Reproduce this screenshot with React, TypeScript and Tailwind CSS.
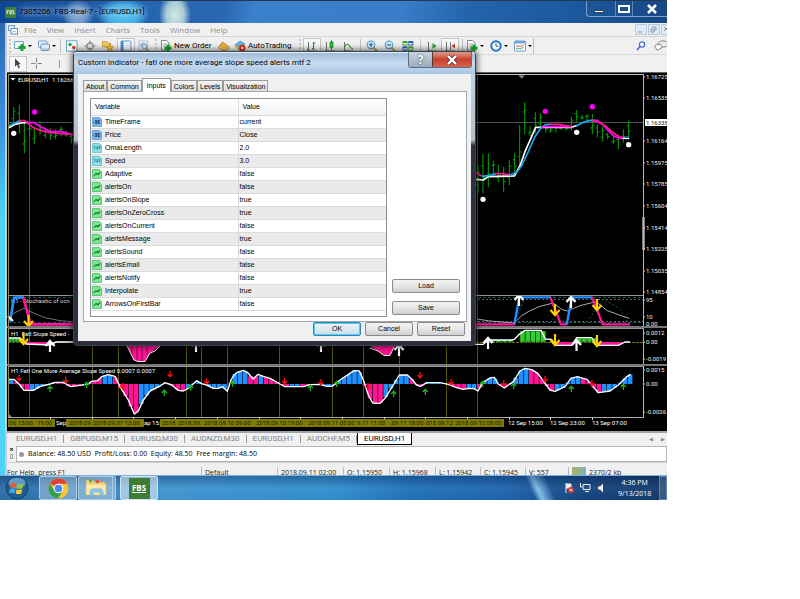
import React from "react";

type Pt = [number, number];

const BLUE = "#1e90ff";
const PINK = "#ff1493";
const GREEN = "#32cd32";
const MAGENTA = "#ff00ff";
const CYAN = "#18a8e8";

/* ---------- small icons ---------- */

function Icon({ children, size = 12 }: { children: React.ReactNode; size?: number }) {
  return (
    <svg width={size} height={size} viewBox="0 0 12 12" className="shrink-0" aria-hidden="true">
      {children}
    </svg>
  );
}

const Plus = ({ x, y }: { x: number; y: number }) => (
  <path d={`M${x - 3.5} ${y}h7M${x} ${y - 3.5}v7`} stroke="#12a52b" strokeWidth="2.800" />
);

const icons = {
  newChart: (
    <Icon>
      <rect x="0.5" y="1.5" width="9" height="7" rx="0.5" fill="#eef6fb" stroke="#6fa5c8" />
      <Plus x={8} y={7.5} />
    </Icon>
  ),
  profiles: (
    <Icon>
      <rect x="0.5" y="1" width="8.5" height="6.5" rx="1" fill="#e6f1fa" stroke="#6e9fcc" />
      <rect x="3" y="4" width="8.5" height="6.500" rx="1" fill="#dfecf8" stroke="#5e92c4" />
      <path d="M3.5 9h7.5" stroke="#8fb5da" />
    </Icon>
  ),
  market: (
    <Icon>
      <rect x="0.5" y="0.8" width="10.5" height="10.4" fill="#f7fbfd" stroke="#6aa3cb" />
      <circle cx="4" cy="4.500" r="1.700" fill="#1fa82d" />
      <circle cx="7.700" cy="7.500" r="1.700" fill="#e0311c" />
    </Icon>
  ),
  cross: (
    <Icon>
      <circle cx="6" cy="6" r="3.200" fill="none" stroke="#85898d" strokeWidth="1.200" />
      <path d="M6 0.500v4M6 7.500v4M0.500 6h4M7.500 6h4" stroke="#85898d" strokeWidth="1.200" />
    </Icon>
  ),
  star: (
    <Icon>
      <path d="M0.500 1.500h4l1 1.500h3v4h-8z" fill="#f0cf62" stroke="#ba8c1c" strokeWidth="0.700" />
      <path d="M8 4l1.200 2.300 2.500.3-1.900 1.700.5 2.500L8 9.600l-2.300 1.200.5-2.500-1.900-1.700 2.500-.3z" fill="#f8c52c" stroke="#b9800a" strokeWidth="0.600" />
    </Icon>
  ),
  navigator: (
    <Icon>
      <rect x="1" y="1" width="10" height="10" rx="1" fill="#f4fafe" stroke="#5d98cf" />
      <rect x="1" y="1" width="2.500" height="10" fill="#4d8ac4" />
      <path d="M5.500 3.500h4M5.500 5.500h4" stroke="#b3cfe6" strokeWidth="0.700" />
    </Icon>
  ),
  tester: (
    <Icon>
      <rect x="1" y="1" width="8.5" height="9.5" fill="#f3f7fa" stroke="#9db6c9" strokeWidth="0.800" />
      <path d="M3 3v4M5 2.500v3M7 3v3" stroke="#5d7f9a" strokeWidth="0.800" />
      <circle cx="6.500" cy="6.500" r="2.400" fill="#cde6f5" stroke="#6c9abd" />
      <path d="M8.300 8.500l2.500 2.500" stroke="#b8953e" strokeWidth="1.500" />
    </Icon>
  ),
  order: (
    <Icon>
      <path d="M1.500 0.500h5l2.500 2.500v7h-7.500z" fill="#fff" stroke="#6f7d85" strokeWidth="0.900" />
      <path d="M3 4h4M3 6h3" stroke="#8d9ba4" strokeWidth="0.800" />
      <Plus x={8} y={8} />
    </Icon>
  ),
  tag: (
    <Icon>
      <path d="M0.800 7l3.700-5 6.500 5v1.500l-4.500 2.500-5.700-3z" fill="#eab53a" stroke="#a9710e" strokeWidth="0.800" />
      <path d="M1 7.200l5.500 2.300 4.300-2" fill="none" stroke="#fae7a5" />
    </Icon>
  ),
  auto: (
    <Icon>
      <path d="M1 5l5-4 5 3-4.500 4z" fill="#62b4e0" stroke="#3a84b4" strokeWidth="0.700" />
      <path d="M1 6l5 5 4-3" fill="#f1c23e" stroke="#c7952b" strokeWidth="0.700" />
      <circle cx="8.300" cy="8" r="3.200" fill="#d9301d" />
      <rect x="7.200" y="6.900" width="2.200" height="2.200" fill="#fff" />
    </Icon>
  ),
  bars: (
    <Icon>
      <path d="M2.500 2v9M1 9.500h2" stroke="#666" />
      <path d="M7.500 2v8M7.500 3h2M6 8.500h1.500" stroke="#1b9e2c" strokeWidth="1.200" />
      <path d="M1 11h10" stroke="#666" strokeWidth="0.800" />
    </Icon>
  ),
  candles: (
    <Icon>
      <path d="M2.500 2v9M1 11h10" stroke="#666" strokeWidth="0.900" />
      <path d="M7.500 0.500v9" stroke="#13851f" />
      <rect x="6" y="2" width="3" height="5.500" fill="#25c438" stroke="#13851f" strokeWidth="0.700" />
    </Icon>
  ),
  line: (
    <Icon>
      <path d="M2.500 2v9M1 11h10" stroke="#666" strokeWidth="0.900" />
      <path d="M2.500 7c2-4 4-3 5-1s2 2.500 3.500 3" stroke="#1b9e2c" strokeWidth="1.100" fill="none" />
    </Icon>
  ),
  zoomIn: (
    <Icon>
      <path d="M7.500 7.500l3.500 3.500" stroke="#c39b32" strokeWidth="2" />
      <circle cx="5" cy="4.800" r="3.800" fill="#cfe8f8" stroke="#5a9aca" strokeWidth="1.100" />
      <path d="M3 4.800h4M5 2.800v4" stroke="#1f6da8" strokeWidth="1.100" />
    </Icon>
  ),
  zoomOut: (
    <Icon>
      <path d="M7.500 7.500l3.500 3.500" stroke="#c39b32" strokeWidth="2" />
      <circle cx="5" cy="4.800" r="3.800" fill="#cfe8f8" stroke="#5a9aca" strokeWidth="1.100" />
      <path d="M3 4.800h4" stroke="#1f6da8" strokeWidth="1.100" />
    </Icon>
  ),
  tile: (
    <Icon>
      <rect x="0.500" y="1" width="5" height="4.500" fill="#3ea634" />
      <rect x="6.300" y="1" width="5" height="4.500" fill="#2c62b8" />
      <rect x="0.500" y="6.300" width="5" height="4.500" fill="#2c62b8" />
      <rect x="6.300" y="6.300" width="5" height="4.500" fill="#3ea634" />
      <path d="M1.300 3.800h3.400M7 3.800h3.400M1.300 9h3.400M7 9h3.400" stroke="#eef6ee" strokeWidth="1.400" />
    </Icon>
  ),
  scroll: (
    <Icon>
      <path d="M2.500 2v9M1 11h10" stroke="#666" strokeWidth="0.900" />
      <path d="M6.500 3v6l4-3z" fill="#1fa82d" />
    </Icon>
  ),
  shift: (
    <Icon>
      <path d="M2.500 2v9M1 11h10M6.500 2v8" stroke="#666" strokeWidth="0.900" />
      <path d="M11 3.500v5l-3.500-2.500z" fill="#c8472c" />
    </Icon>
  ),
  clock: (
    <Icon>
      <circle cx="6" cy="6" r="4.700" fill="#f4fafe" stroke="#2173c4" strokeWidth="2" />
      <path d="M6 3.200v3h2.200" stroke="#444" strokeWidth="0.900" fill="none" />
    </Icon>
  ),
  template: (
    <Icon>
      <rect x="0.500" y="1" width="11" height="10" rx="0.800" fill="#f7fbfd" stroke="#6fa0cc" />
      <rect x="0.500" y="1" width="11" height="2.500" fill="#6fa8d8" />
      <path d="M2 6.500l2-1 2 1 3.500-1.500" stroke="#c14a32" fill="none" strokeWidth="0.800" />
      <path d="M2 9l2-1 2 .8 3.500-1.500" stroke="#2c9a3a" fill="none" strokeWidth="0.800" />
    </Icon>
  ),
};

function Tool({ name, icon, pressed, drop, label, wide }: {
  name: string; icon: React.ReactNode; pressed?: boolean; drop?: boolean; label?: string; wide?: string;
}) {
  return (
    <button
      type="button"
      aria-label={name}
      className={`flex h-4 shrink-0 items-center ${label || drop ? "justify-start pl-px" : "justify-center"} ${wide ?? "w-[18px]"} ${pressed ? "border border-[#c4c4c4] bg-[#f8f8f8]" : ""}`}
    >
      {icon}
      {label && <span className="ml-0.5 font-['Roboto'] text-[8px] leading-3 whitespace-nowrap text-black">{label}</span>}
      {drop && <span className="ml-0.5 h-0 w-0 border-x-2 border-t-2 border-x-transparent border-t-black" />}
    </button>
  );
}

const Sep = () => (
  <span className="flex w-1.5 shrink-0 justify-center"><i className="h-3.5 w-px bg-[#c2c2c2]" /></span>
);
const Grip = () => (
  <span className="flex w-1.5 shrink-0 justify-center"><i className="h-3.5 border-l-2 border-dotted border-[#c5c5c5]" /></span>
);

/* ---------- chart helpers ---------- */

const toPoints = (pts: Pt[]) => pts.map((p) => p.join(",")).join(" ");

function Line({ pts, color, w = 1 }: { pts: Pt[]; color: string; w?: number }) {
  return <polyline points={toPoints(pts)} fill="none" stroke={color} strokeWidth={w} strokeLinejoin="round" />;
}

function Pane({ top, h, children }: { top: number; h: string; children: React.ReactNode }) {
  return (
    <svg className={`block w-full bg-black font-['Roboto'] text-[6px] ${h}`} aria-hidden="true">
      <g transform={`translate(-7 ${-top})`}>
        <g stroke="#5a5500" strokeWidth="1">
          {[29.5, 92.5, 118.5, 186.5, 201.5, 227.5, 279.5, 332.5, 363.5, 399.5, 446.5, 477.5].map((x) => (
            <path key={x} d={`M${x} 74V417`} />
          ))}
        </g>
        {children}
        <path d="M8.500 74V430" stroke="#8b8b50" />
        <path d="M643.500 74V417" stroke="#b8b8b8" />
      </g>
    </svg>
  );
}

function BigArrow({ x, y, down }: { x: number; y: number; down?: boolean }) {
  return (
    <path
      transform={`translate(${x} ${y}) scale(1 ${down ? -1 : 1})`}
      d="M0 6V-5M-4.500 0L0 -5L4.500 0"
      fill="none"
      stroke={down ? "#ffd000" : "#ffffff"}
      strokeWidth="2.200"
    />
  );
}

function SmallArrow({ x, y, down }: { x: number; y: number; down?: boolean }) {
  return (
    <path
      transform={`translate(${x} ${y}) scale(1 ${down ? -1 : 1})`}
      d="M0 3V-2.500M-2.500 0L0 -2.800L2.500 0"
      fill="none"
      stroke={down ? "#ff1010" : "#22b022"}
      strokeWidth="1.300"
    />
  );
}

const AxisText = ({ y, children, tick = true }: { y: number; children: string; tick?: boolean }) => (
  <>
    {tick && <path d={`M643 ${y}h2`} stroke="#ccc" />}
    <text x="646" y={y + 2} fill="#f0f0f0">{children}</text>
  </>
);

const THIRD = 1 / 3;

const rightCandles: [number, number, number][] = [
  [24, 495, 580], [39, 462, 580], [55, 460, 562], [70, 482, 530], [85, 494, 548], [101, 500, 575], [118, 480, 555],
  [134, 460, 525], [149, 375, 510], [164, 307, 403], [180, 378, 408], [196, 337, 400], [211, 340, 385], [227, 372, 398],
  [242, 380, 398], [258, 376, 398], [273, 370, 390], [289, 374, 392], [304, 350, 392], [320, 330, 365], [336, 345, 358],
  [351, 343, 362], [367, 342, 402], [382, 372, 412], [398, 380, 425], [413, 398, 418], [430, 410, 432], [445, 405, 447],
  [460, 388, 428], [476, 362, 415],
];
const leftCandles: [number, number, number][] = [
  [41, 111, 160], [58, 104, 190], [73, 156, 250], [89, 168, 200], [103, 172, 222], [120, 155, 193], [136, 175, 205],
  [151, 175, 210], [167, 178, 208], [183, 170, 200], [199, 182, 200], [214, 190, 220],
];

function Candles({ data }: { data: [number, number, number][] }) {
  return (
    <g stroke="#00a800" strokeWidth="3">
      {data.map(([x, a, b], i) => (
        <path key={x} d={`M${x} ${a}V${b}M${x - 6} ${a + (b - a) * (i % 2 ? 0.3 : 0.7)}h6M${x} ${a + (b - a) * (i % 3 ? 0.6 : 0.25)}h6`} />
      ))}
    </g>
  );
}

const prices: [number, string][] = [
  [77, "1.16725"], [98, "1.16535"], [141, "1.16164"], [163, "1.15975"], [184, "1.15785"], [206, "1.15604"],
  [228, "1.15414"], [249, "1.15225"], [271, "1.15035"], [292, "1.14854"],
];

function PricePane() {
  return (
    <Pane top={73} h="h-[222px]">
      <path d="M8 122.500H644" stroke="#4c545c" />
      <g transform={`translate(470 0) scale(${THIRD})`}>
        <Candles data={rightCandles} />
        <Line w={5} color="#fff" pts={[[18, 538], [40, 540], [55, 530], [133, 528], [150, 497], [165, 455], [197, 382], [305, 382], [322, 376]]} />
        <Line w={5} color={PINK} pts={[[6, 510], [18, 518], [35, 528]]} />
        <Line w={5} color={CYAN} pts={[[35, 529], [60, 526], [78, 521]]} />
        <Line w={5} color={PINK} pts={[[75, 521], [95, 521], [125, 525]]} />
        <Line w={5} color={CYAN} pts={[[120, 525], [140, 517], [155, 497], [175, 455], [195, 410], [213, 383], [227, 374], [242, 373]]} />
        <Line w={5} color={MAGENTA} pts={[[213, 380], [305, 380]]} />
        <Line w={5} color={PINK} pts={[[240, 373], [265, 373], [305, 380]]} />
        <Line w={5} color={CYAN} pts={[[318, 379], [340, 367], [360, 361], [384, 362]]} />
        <Line w={5} color={MAGENTA} pts={[[367, 361], [383, 362], [395, 370], [415, 392], [432, 409], [448, 415], [462, 415]]} />
        <Line w={5} color={PINK} pts={[[367, 361], [385, 367], [405, 377], [430, 399], [450, 411], [462, 413]]} />
        <Line w={3} color={CYAN} pts={[[460, 411], [477, 411]]} />
        <Line w={4} color="#fff" pts={[[458, 415], [478, 416]]} />
        <circle cx="226" cy="334" r="8" fill={MAGENTA} />
        <circle cx="367" cy="320" r="8" fill={MAGENTA} />
        <circle cx="39" cy="598" r="8" fill="#fff" />
        <circle cx="320" cy="397" r="8" fill="#fff" />
        <circle cx="476" cy="434" r="8" fill="#fff" />
        <path d="M145 226h19l-9 10z" fill="#7b8794" />
      </g>
      <g transform={`translate(0 70) scale(${THIRD})`}>
        <Candles data={leftCandles} />
        <Line w={5} color="#fff" pts={[[27, 173], [45, 163], [62, 159], [84, 157]]} />
        <Line w={5} color={CYAN} pts={[[27, 168], [58, 152]]} />
        <Line w={5} color={MAGENTA} pts={[[82, 158], [102, 158], [125, 172], [150, 184], [185, 185], [218, 194]]} />
        <Line w={5} color={PINK} pts={[[56, 152], [74, 152], [98, 172], [120, 181], [150, 188], [218, 194]]} />
        <circle cx="104" cy="126" r="8" fill={MAGENTA} />
        <circle cx="41" cy="190" r="8" fill="#fff" />
      </g>
      <path d="M8 74.500H644" stroke="#c0c0c0" />
      <path d="M10.500 78h5l-2.500 2.500z" fill="#fff" />
      <text x="18" y="82" fill="#fff">EURUSD,H1&nbsp; 1.16266</text>
      {prices.map(([y, t]) => <AxisText key={t} y={y}>{t}</AxisText>)}
      <rect x="645" y="119" width="30" height="7" fill="#fff" />
      <text x="646" y="124.500" fill="#222">1.16338</text>
      <path d="M643.500 217V250" stroke="#fff" strokeWidth="2" />
    </Pane>
  );
}

function StochasticPane() {
  return (
    <Pane top={295} h="h-[31px]">
      <path d="M8 297.500H644M8 322.500H644" stroke="#0b5c5c" strokeDasharray="3 2" />
      <path d="M478 299.500H644M478 321.500H644" stroke="#8b8b8b" strokeDasharray="2 2" strokeWidth="0.700" />
      <text x="11" y="303" fill="#ddd">H1 - Stochastic of ocn</text>
      <g transform={`translate(0 285) scale(${THIRD})`}>
        <Line w={2} color="#aaa" pts={[[30, 90], [72, 70], [100, 84], [135, 98], [180, 107], [225, 111]]} />
        <Line w={8} color={BLUE} pts={[[30, 110], [42, 38], [72, 37]]} />
        <Line w={8} color={PINK} pts={[[70, 38], [92, 118], [225, 118]]} />
      </g>
      <path d="M8 316l5 5" stroke="#fff" strokeWidth="2" />
      <BigArrow x={28.5} y={321} down />
      <g transform={`translate(470 285) scale(${THIRD})`}>
        <path d="M133 112l30-70M350 112l50-70 50 30 25 45" stroke="#0b5c5c" fill="none" strokeWidth="3" strokeDasharray="7 6" />
        <Line w={3} color="#aaa" pts={[[20, 102], [60, 108], [133, 114], [155, 92], [180, 77], [210, 64], [250, 54], [275, 73], [292, 78], [330, 62], [378, 50], [410, 76], [450, 91], [478, 100]]} />
        <Line w={7} color={PINK} pts={[[6, 118], [135, 118]]} />
        <Line w={7} color={BLUE} pts={[[133, 118], [148, 37], [243, 37]]} />
        <Line w={7} color={PINK} pts={[[241, 37], [273, 118], [292, 118]]} />
        <Line w={7} color={BLUE} pts={[[290, 118], [306, 37], [367, 37]]} />
        <Line w={7} color={PINK} pts={[[366, 37], [398, 118], [480, 118]]} />
      </g>
      <BigArrow x={519} y={300} />
      <BigArrow x={571} y={302} />
      <BigArrow x={555} y={310} down />
      <BigArrow x={597} y={305} down />
      <AxisText y={300}>95</AxisText>
      <AxisText y={317}>10</AxisText>
      <AxisText y={324} tick={false}>0.00</AxisText>
      <path d="M8 295.500H644" stroke="#999" />
    </Pane>
  );
}

function SlopePane() {
  const up = [520, 525.2, 530.4, 535.6, 540.8];
  return (
    <Pane top={328} h="h-[36px]">
      <path d="M8 342.500H644" stroke="#77701c" strokeDasharray="3 1" />
      <text x="11" y="336" fill="#fff">H1&nbsp; Fatl Slope Speed -</text>
      <g fill={GREEN} stroke="#073a07" strokeWidth="0.500">
        {[9, 12, 15, 18].map((x) => <rect key={x} x={x} y="338" width="3" height="4" />)}
        {up.map((x) => <rect key={x} x={x} y="331" width="5" height="11" />)}
        {[577, 582, 587, 592].map((x) => <rect key={x} x={x} y="338" width="5" height="4" />)}
        {[490, 496, 502, 508].map((x) => <rect key={x} x={x} y="340" width="5" height="2" />)}
      </g>
      <g fill={PINK}>
        <rect x="25" y="342" width="25" height="3" />
        <rect x="555" y="342" width="18" height="3" />
        <rect x="598" y="342" width="23" height="3" />
      </g>
      <path d="M126 343L134 360L138 362H145L150 353L160 346V343z" fill={PINK} />
      <path d="M132 345v14M137 345v16M142 345v16M147 345v10" stroke="#4a0830" strokeWidth="0.700" />
      <Line color="#eee" pts={[[126, 344], [134, 360], [138, 361.5], [145, 361.5], [150, 353], [155, 351], [160, 346]]} />
      <path d="M370 346L378 351L384 355H390L395 346z" fill={PINK} />
      <Line color="#eee" pts={[[370, 348], [378, 351], [384, 355.5], [390, 355.5], [394, 347]]} />
      <Line color="#fff" w={1.5} pts={[[9, 338], [20, 338], [27, 344], [50, 345], [56, 342], [73, 342]]} />
      <g transform={`translate(470 285) scale(${THIRD})`}>
        <Line w={4} color="#fff" pts={[[15, 178], [40, 178], [55, 165], [125, 165], [133, 163], [148, 148], [165, 136], [213, 136], [226, 162], [245, 163], [255, 181], [305, 181], [320, 158], [365, 158], [380, 181], [445, 181], [465, 171], [480, 171]]} />
      </g>
      <BigArrow x={23.5} y={339} down />
      <BigArrow x={50} y={346} />
      <BigArrow x={196} y={346} />
      <BigArrow x={321} y={346} />
      <BigArrow x={399} y={350} />
      <BigArrow x={488} y={343} />
      <BigArrow x={576.5} y={345} />
      <BigArrow x={555} y={340} down />
      <BigArrow x={597} y={341} down />
      <AxisText y={333}>0.0012</AxisText>
      <AxisText y={342}>0.00</AxisText>
      <AxisText y={359}>-0.0019</AxisText>
      <path d="M8 328.500H644" stroke="#999" />
    </Pane>
  );
}

/* Curve of the averaged slope speed, in chart pixels. */
const averageLeft: Pt[] = [
  [27, 283], [42, 283], [60, 300], [72, 316], [100, 316], [120, 305], [150, 297], [165, 292], [190, 292], [212, 305], [240, 301],
  [265, 297], [275, 289], [293, 287], [305, 275], [325, 269], [345, 274], [360, 305], [385, 345], [403, 387], [415, 378],
  [430, 345], [450, 318], [480, 303], [495, 293], [515, 300], [535, 316], [550, 318], [565, 310], [590, 287], [605, 296],
  [620, 300], [640, 310], [655, 310], [668, 305], [682, 319],
];
const averageMid: Pt[] = [
  [3, 135], [12, 120], [22, 112], [40, 106], [52, 112], [70, 132], [84, 118], [100, 124], [120, 130], [150, 147], [165, 155], [220, 155],
  [240, 149], [270, 148], [290, 154], [308, 153], [330, 135], [350, 122], [372, 107], [388, 108], [400, 135], [415, 180],
  [428, 204], [450, 205], [465, 190], [490, 150], [508, 120], [532, 120], [545, 132], [560, 150], [572, 154], [590, 143],
  [630, 143], [655, 148], [680, 158], [700, 163],
];
const averageRight: Pt[] = [
  [-5, 310], [12, 311], [24, 318], [38, 293], [60, 279], [73, 277], [85, 297], [103, 309], [130, 290], [150, 258], [165, 250],
  [185, 254], [203, 265], [218, 285], [240, 315], [255, 319], [285, 305], [303, 280], [322, 275], [350, 283], [365, 300],
  [385, 323], [420, 318], [445, 300], [470, 275], [482, 268],
];
const shift = (pts: Pt[], dx: number, dy: number): Pt[] => pts.map(([x, y]) => [dx + x / 3, dy + y / 3]);
const average: Pt[] = [...shift(averageLeft, 0, 285), ...shift(averageMid, 230, 335), ...shift(averageRight, 470, 285)];

const colourStops: number[] = [
  12, 32, 55, 80, 93, 100, 111, 137, 167, 185, 202, 220, 225, 230, 246, 256, 262, 292, 298, 308, 318, 330, 361, 382, 407, 423,
  447, 465, 475, 480, 497, 507, 527, 553, 580, 600, 640,
];

const pinkEdges = new Set([32, 55, 80, 100, 111, 137, 185, 230, 256, 292, 308, 382, 423, 465, 480, 507, 553, 600]);
const blueEdges = new Set([12, 55, 93, 111, 167, 202, 225, 246, 262, 298, 330, 361, 407, 447, 475, 497, 527, 580, 640]);
const segmentColour = (edge: number) => (blueEdges.has(edge) ? BLUE : pinkEdges.has(edge) ? PINK : BLUE);

function valueAt(x: number): number {
  for (let i = 1; i < average.length; i++) {
    const [x0, y0] = average[i - 1];
    const [x1, y1] = average[i];
    if (x <= x1) return y0 + ((y1 - y0) * (x - x0)) / (x1 - x0);
  }
  return average[average.length - 1][1];
}

const reds: Pt[] = [
  [19, 378], [65.7, 380], [122.7, 386], [170, 374], [206.7, 381], [284.7, 381], [321, 382], [368, 386], [420, 375],
  [451, 382], [503.7, 383], [545, 379], [592, 383],
];
const greens: Pt[] = [
  [50, 389], [86.7, 385], [164.3, 393], [190.7, 388], [232.5, 384], [310.3, 388], [336.7, 384], [393.7, 394], [425.3, 392],
  [482.7, 384], [513.7, 386], [571.3, 389], [623.3, 387],
];

function AveragePane() {
  const bars = Array.from({ length: 120 }, (_, i) => 9 + i * 5.2).filter((x) => x < 628);
  return (
    <Pane top={366} h="h-[51px]">
      {bars.map((x) => {
        const y = valueAt(x + 2.5);
        const edge = colourStops.find((s) => x + 2.5 <= s) ?? 640;
        return (
          <rect key={x} x={x} y={Math.min(y, 384)} width="4.600" height={Math.abs(y - 384)} fill={segmentColour(edge)} />
        );
      })}
      <Line color="#fff" w={1.4} pts={average} />
      <text x="11" y="373" fill="#fff">H1 Fatl One More Average Slope Speed 0.0007 0.0007</text>
      {reds.map(([x, y]) => <SmallArrow key={x} x={x} y={y} down />)}
      {greens.map(([x, y]) => <SmallArrow key={x} x={x} y={y} />)}
      <AxisText y={370}>0.0015</AxisText>
      <AxisText y={384}>0.00</AxisText>
      <AxisText y={412}>-0.0026</AxisText>
      <path d="M8 366.500H644" stroke="#999" />
      <path d="M8 417v-4l4 4z" fill="#7b8794" />
    </Pane>
  );
}

const stamps: [number, string, boolean][] = [
  [8, ".06 15:00 : 19:00", true], [56, "Sep", false], [69, "2018.09.", true], [93, "2018.09.07 12:00", true],
  [144, "ap 15:", false], [162, "2018", true], [178, "2018.09.", true], [204, "2018.09.10 09:00", true],
  [256, "2018.09.10 19:00", true], [308, "2018.09.11 05:00", true], [357, "9.11 11:00", true], [390, ".09.11 18:00", true],
  [426, "018.09.12", true], [455, "2018.09.12 09:00", true], [508, "12 Sep 15:00", false], [550, "12 Sep 23:00", false],
  [592, "13 Sep 07:00", false],
];

function TimeAxis() {
  return (
    <svg className="block h-[14px] w-full bg-black font-['Roboto'] text-[6px]" aria-hidden="true">
      <g transform="translate(-7 -417)">
        <path d="M8 417.500H644" stroke="#aaa" />
        <path d="M50.500 417v3M92.500 417v3M133.500 417v3M175.500 417v3M217.500 417v3M259.500 417v3M300.500 417v3M342.500 417v3M384.500 417v3M425.500 417v3M467.500 417v3M509.500 417v3M550.500 417v3M592.500 417v3" stroke="#ccc" />
        <path d="M8 419h47v8H8zM66 419h78v8H66zM160 419h344v8H160z" fill="#7f7c00" />
        {stamps.map(([x, t, marked]) => (
          <text key={x} x={x} y="425" fill={marked ? "#1c1c00" : "#fff"}>{t}</text>
        ))}
      </g>
    </svg>
  );
}

/* ---------- dialog ---------- */

type Kind = "enum" | "num" | "bool";
const rows: [Kind, string, string][] = [
  ["enum", "TimeFrame", "current"], ["enum", "Price", "Close"], ["num", "OmaLength", "2.0"], ["num", "Speed", "3.0"],
  ["bool", "Adaptive", "false"], ["bool", "alertsOn", "false"], ["bool", "alertsOnSlope", "true"],
  ["bool", "alertsOnZeroCross", "true"], ["bool", "alertsOnCurrent", "false"], ["bool", "alertsMessage", "true"],
  ["bool", "alertsSound", "false"], ["bool", "alertsEmail", "false"], ["bool", "alertsNotify", "false"],
  ["bool", "Interpolate", "true"], ["bool", "ArrowsOnFirstBar", "false"],
];

function KindIcon({ kind }: { kind: Kind }) {
  const fill = kind === "enum" ? "#7db4e6" : kind === "num" ? "#8fdfea" : "#7fe695";
  const edge = kind === "enum" ? "#5c98cf" : kind === "num" ? "#5cbcc8" : "#45bd5c";
  return (
    <svg width="10" height="10" viewBox="0 0 10 10" className="shrink-0" aria-hidden="true">
      <path d="M0.500 0.500h7l2 2v7h-9z" fill={fill} stroke={edge} strokeWidth="0.800" />
      {kind === "bool" && <path d="M1.800 7l2.200-2.500M4 4.500l1.500 1M5.500 6l2.500-2.500" stroke="#0d6a20" strokeWidth="1.100" fill="none" />}
      {kind === "enum" && <path d="M1 5h1.500M3 3.500h1.800v3H3M3 5h1.800M8 3.500H6v3h2M6 5h1.900" stroke="#173f78" strokeWidth="0.900" fill="none" />}
      {kind === "num" && <path d="M2.500 3v3.500M1.500 3h1M4 3v2.500h1.500M5.500 3v3.500M7 3h1v3H7z" stroke="#238693" strokeWidth="0.700" fill="none" />}
    </svg>
  );
}

const pushBtn =
  "h-3.5 rounded-xs border border-[#8a8a8a] bg-linear-to-b from-[#f3f3f3] via-[#e6e6e6] to-[#cfcfcf] text-center leading-3 text-black";

function Dialog() {
  return (
    <section
      role="dialog"
      aria-label="Custom Indicator"
      className="absolute top-[51px] left-[73px] flex w-[403px] flex-col rounded-[4px] border border-[#38424e] bg-linear-to-b from-[#c3d9ee] via-[#b4bdc6] via-30% to-[#2b303c] to-32% px-1 pb-1 shadow-[0_0_6px_1px_rgba(0,0,0,0.65)]"
    >
      <header className="-mx-1 flex h-[22px] items-start justify-between rounded-t-[3px] bg-linear-to-b from-[#9db9d6] via-[#c8dcf0] to-[#aac6e4] pr-[3px] pl-1 shadow-[inset_0_1px_0_#e8f2fb]">
        <h1 className="pt-[5px] font-['Roboto'] text-[8px] leading-3 whitespace-nowrap text-black">
          Custom Indicator - fatl one more average slope speed alerts mtf 2
        </h1>
        <div className="flex h-4 overflow-hidden rounded-b-[3px] border border-t-0 border-[#5f6f80]">
          <button type="button" aria-label="Help" className="flex w-[23px] items-center justify-center bg-linear-to-b from-[#c7d3df] to-[#98abc0] text-[12px] leading-3 font-bold text-white [text-shadow:0_0_2px_#222]">?</button>
          <button type="button" aria-label="Close dialog" className="flex w-[39px] items-center justify-center border-l border-[#5f3a3a] bg-linear-to-b from-[#dd9a8c] via-[#c6402c] to-[#d9644c]">
            <svg width="12" height="10" viewBox="0 0 12 10" aria-hidden="true">
              <path d="M2 1l8 8M10 1l-8 8" stroke="#63383a" strokeWidth="4" />
              <path d="M2 1l8 8M10 1l-8 8" stroke="#fff" strokeWidth="2.400" />
            </svg>
          </button>
        </div>
      </header>

      <div className="bg-[#f0f0f0] pt-1 pr-1 pb-[5px] pl-[5px] font-['Liberation_Sans'] text-[7px] leading-[9px] text-black">
        <div role="tablist" className="flex items-end">
          {["About", "Common", "Inputs", "Colors", "Levels", "Visualization"].map((t) => (
            <button
              key={t}
              type="button"
              role="tab"
              aria-selected={t === "Inputs"}
              className={
                t === "Inputs"
                  ? "relative -mb-px h-[14px] border border-b-0 border-[#9a9a9a] bg-white px-1"
                  : "h-[11px] border border-b-0 border-[#9a9a9a] bg-linear-to-b from-[#f4f4f4] to-[#dcdcdc] px-0.5"
              }
            >
              {t}
            </button>
          ))}
        </div>
        <div className="flex items-stretch gap-[5px] border border-[#a5a5ac] bg-white p-1.5 pb-1">
          <div className="h-[219px] w-[297px] shrink-0 border border-[#8d8f99]">
            <table className="w-full table-fixed border-collapse text-left">
              <thead>
                <tr className="h-4 bg-linear-to-b from-white to-[#f2f3f5]">
                  <th className="w-[147px] border-r border-b border-[#dcdcdc] p-0 pl-1 font-normal">Variable</th>
                  <th className="border-b border-[#dcdcdc] p-0 pl-1 font-normal">Value</th>
                </tr>
              </thead>
              <tbody>
                {rows.map(([kind, name, value]) => (
                  <tr key={name} className="h-[13px] border-b border-[#dadada] odd:bg-white even:bg-[#eaeaea]">
                    <td className="border-r border-[#dadada] p-0 pl-px">
                      <span className="flex items-center gap-[3px]"><KindIcon kind={kind} />{name}</span>
                    </td>
                    <td className="p-0 pl-px">{value}</td>
                  </tr>
                ))}
              </tbody>
            </table>
          </div>
          <div className="flex w-[68px] flex-col justify-end gap-2 pb-0.5">
            <button type="button" className={pushBtn}>Load</button>
            <button type="button" className={pushBtn}>Save</button>
          </div>
        </div>
        <div className="flex justify-end gap-1 pr-0.5">
          <button type="button" className="h-3.5 w-12 rounded-xs border border-[#2b86b5] bg-linear-to-b from-[#eef5f9] to-[#c9dce8] text-center leading-3 shadow-[inset_0_0_0_1px_#55ccf2]">OK</button>
          <button type="button" className={`w-12 ${pushBtn}`}>Cancel</button>
          <button type="button" className={`w-12 ${pushBtn}`}>Reset</button>
        </div>
      </div>
    </section>
  );
}

/* ---------- page ---------- */

const chartTabs = ["EURUSD,H1", "GBPUSD,M15", "EURUSD,M30", "AUDNZD,M30", "EURUSD,H1", "AUDCHF,M5"];

const childControls: [string, string][] = [
  ["Minimize chart", "M2 7h4"],
  ["Restore chart", "M3 2h4v3H5M2 4h3v3H2z"],
  ["Close chart", "M2 2l4 4M6 2l-4 4"],
];

export default function App() {
  return (
    <main className="min-h-screen bg-white font-['Open_Sans','Noto_Sans',sans-serif]">
      <div className="relative w-5/6 overflow-hidden">
        <div className="bg-linear-to-b from-[#2a5fa5] via-[#3b8ee2] via-25% to-[#4bd4f6] to-45%">
          {/* title bar */}
          <header className="flex h-[23px] items-start justify-between border-t border-[#23374f] bg-[radial-gradient(ellipse_16px_16px_at_78px_14px,#86a8d4_0,#6f97ca_50%,transparent_100%),radial-gradient(ellipse_26px_18px_at_123px_14px,#4fc4f2_0,#45b0e8_55%,transparent_100%),radial-gradient(ellipse_16px_24px_at_175px_14px,#d3e8df_0,#a9cbd6_55%,transparent_100%),linear-gradient(100deg,#0d4595_0,#2463ae_20%,#2a68b4_34%,#3a80ca_38%,#3a7dc8_60%,#2364ab_70%,#1d5aa0_84%,#164883_100%)] pl-[5px]">
            <div className="flex items-center gap-[3px] pt-[5px]">
              <svg width="11" height="11" viewBox="0 0 11 11" aria-hidden="true">
                <rect width="11" height="11" rx="1" fill="#3f7f35" />
                <path d="M2 7V3.500h2M2 5h1.500M5 3.500V7h1.300V3.500zM9 3.500H7.800V5.200H9V7H7.600" stroke="#fff" strokeWidth="0.800" fill="none" />
              </svg>
              <span className="font-['Roboto'] text-[8px] leading-3 whitespace-nowrap text-black [text-shadow:0_0_5px_#c5ddf3,0_0_8px_#c5ddf3]">7305206: FBS-Real-7 - [EURUSD,H1]</span>
            </div>
            <div className="flex h-4 rounded-bl-[4px] border-b border-l border-[#7fa3cd] text-white">
              <button type="button" aria-label="Minimize" className="flex w-7 items-end justify-center pr-1 pb-[3px]"><i className="h-[3px] w-2.5 border border-[#33485f] bg-white" /></button>
              <button type="button" aria-label="Restore" className="flex w-[18px] items-center justify-center border-x border-[#5f87b8]"><i className="h-2 w-3 border-2 border-white" /></button>
              <button type="button" aria-label="Close" className="flex w-[34px] items-center justify-center pl-1">
                <svg width="12" height="10" viewBox="0 0 12 10" aria-hidden="true"><path d="M2 1l8 8M10 1l-8 8" stroke="#fff" strokeWidth="2.500" /></svg>
              </button>
            </div>
          </header>

          <div className="ml-[5px] border-l-2 border-[#c3ccd4] bg-[#f0f0f0]">
            {/* menu */}
            <nav className="flex h-[14px] items-center border-b border-[#d5d5d5] pl-px text-[8px] leading-3 text-[#8f8f8f]">
              <svg width="10" height="10" viewBox="0 0 10 10" className="mr-1.5" aria-hidden="true">
                <rect x="0.500" y="0.500" width="6" height="5" fill="#e4effa" stroke="#6e9ed0" />
                <rect x="3" y="3.500" width="6.500" height="5.500" fill="#fff" stroke="#5d90c8" />
                <path d="M4.500 7.500l1-1.500 1 1 1.500-1.500" stroke="#5d90c8" fill="none" strokeWidth="0.700" />
              </svg>
              <div className="flex gap-2.5">
                {["File", "View", "Insert", "Charts", "Tools", "Window", "Help"].map((m) => <button key={m} type="button">{m}</button>)}
              </div>
              <div className="-mr-1.5 ml-auto flex gap-px">
                {childControls.map(([label, d]) => (
                  <button key={label} type="button" aria-label={label} className="flex h-[11px] w-3 items-center justify-center border border-[#b9cbdc] bg-[#dfeaf5]">
                    <svg width="9" height="9" viewBox="0 0 9 9" aria-hidden="true"><path d={d} stroke="#7e97b2" fill="none" /></svg>
                  </button>
                ))}
              </div>
            </nav>
            {/* toolbars */}
            <div className="flex h-[17px] items-center">
              <div className="flex items-center border-r border-[#c0c0c0]">
                <Grip />
                <Tool name="New chart" icon={icons.newChart} drop wide="w-6" />
                <Tool name="Profiles" icon={icons.profiles} drop wide="w-5" />
                <Sep />
                <Tool name="Market watch" icon={icons.market} />
                <Tool name="Data window" icon={icons.cross} />
                <Tool name="Favorites" icon={icons.star} />
                <Tool name="Navigator" icon={icons.navigator} pressed />
                <Tool name="Strategy tester" icon={icons.tester} />
                <Grip />
                <Tool name="New Order" icon={icons.order} label="New Order" wide="w-14" />
                <Tool name="MetaEditor" icon={icons.tag} />
                <Tool name="AutoTrading" icon={icons.auto} label="AutoTrading" wide="w-16" />
                <Grip />
                <Tool name="Bar chart" icon={icons.bars} pressed />
                <Tool name="Candlesticks" icon={icons.candles} />
                <Tool name="Line chart" icon={icons.line} />
                <Sep />
                <Tool name="Zoom in" icon={icons.zoomIn} />
                <Tool name="Zoom out" icon={icons.zoomOut} />
                <Tool name="Tile windows" icon={icons.tile} />
                <Sep />
                <Tool name="Auto scroll" icon={icons.scroll} />
                <Tool name="Chart shift" icon={icons.shift} pressed />
                <Sep />
                <Tool name="Indicators" icon={icons.order} drop wide="w-6" />
                <Tool name="Periods" icon={icons.clock} drop wide="w-6" />
                <Tool name="Templates" icon={icons.template} drop wide="w-5" />
              </div>
              <div className="ml-auto flex shrink-0 items-center gap-2">
                <button type="button" aria-label="Search">
                  <svg width="10" height="10" viewBox="0 0 10 10" className="block" aria-hidden="true">
                    <circle cx="6" cy="3.500" r="2.600" fill="#fff" stroke="#3f6fd0" strokeWidth="1.300" />
                    <path d="M4 5.500L1 9" stroke="#3f6fd0" strokeWidth="1.600" />
                  </svg>
                </button>
                <button type="button" aria-label="Chat">
                  <svg width="13" height="11" viewBox="0 0 13 11" className="block" aria-hidden="true">
                    <ellipse cx="9" cy="4" rx="5" ry="3.200" fill="#e8e8e8" stroke="#8b8b8b" />
                    <path d="M1 7a3.500 2.500 0 1 1 4 2.200L3 10.500V9C2 9 1 8 1 7z" fill="#fafafa" stroke="#8b8b8b" />
                  </svg>
                </button>
              </div>
            </div>
            <div className="flex h-[18px] items-center border-t border-[#dadada]">
              <button type="button" aria-label="Cursor" className="ml-0.5 flex h-4 w-[18px] items-center justify-center border border-[#c8c8c8] bg-[#f8f8f8]">
                <svg width="8" height="11" viewBox="0 0 8 11" aria-hidden="true"><path d="M1 0.500v8l2-1.800 1.500 3.500 1.400-.7-1.500-3.200H7z" fill="#444" /></svg>
              </button>
              <button type="button" aria-label="Crosshair" className="flex w-[18px] justify-center">
                <svg width="11" height="11" viewBox="0 0 11 11" aria-hidden="true"><path d="M5.500 0v4.500M5.500 6.500V11M0 5.500h4.500M6.500 5.500H11" stroke="#888" /></svg>
              </button>
              <span className="ml-3.5 h-2 w-px bg-[#999]" />
            </div>

            {/* charts */}
            <div className="border-t border-[#606060] bg-black">
              <PricePane />
              <StochasticPane />
              <div className="h-0.5 bg-[#777]" />
              <SlopePane />
              <div className="h-0.5 bg-[#777]" />
              <AveragePane />
              <TimeAxis />
            </div>

            {/* chart tabs */}
            <div className="flex h-[15px] items-start border-t-2 border-[#a2a2a2] pl-[3px] font-['Roboto'] text-[8px] leading-3 text-[#828282]">
              {chartTabs.map((t, i) => (
                <button key={i} type="button" className="flex items-center px-1.5 whitespace-nowrap">
                  {t}
                  <i className="relative left-1.5 h-2 w-px bg-[#999]" />
                </button>
              ))}
              <button type="button" className="border border-t-0 border-black bg-white px-1.5 leading-[11px] text-black">EURUSD,H1</button>
              <div className="ml-auto flex gap-2 pr-0.5 text-[5px]">
                <button type="button" aria-label="Previous tab">◀</button>
                <button type="button" aria-label="Next tab">▶</button>
              </div>
            </div>
            {/* account line */}
            <div className="flex h-4 text-[7px] text-black">
              <div className="flex w-[9px] flex-col items-center leading-[8px] font-bold">
                <button type="button" aria-label="Close terminal">×</button>
                <span className="h-[5px] w-[3px] border border-[#aaa]" />
              </div>
              <p className="flex flex-1 items-center border border-[#b5b5b5] bg-white pl-0.5 leading-3 whitespace-pre">
                <i className="mr-1 h-[5px] w-[5px] rounded-full bg-[#999]" />
                {"Balance: 48.50 USD  Profit/Loss: 0.00  Equity: 48.50  Free margin: 48.50"}
              </p>
            </div>
            {/* status bar */}
            <div className="flex h-[13px] overflow-hidden border-t border-[#d0d0d0] pt-1 text-[7px] leading-3 whitespace-nowrap text-[#222]">
              <span className="w-[194px]">For Help, press F1</span>
              <span className="w-[76px] border-l border-[#bbb] pl-[3px]">Default</span>
              <span className="w-[66px] border-l border-[#bbb] pl-[3px]">2018.09.11 02:00</span>
              <span className="w-[46px] border-l border-[#bbb] pl-[3px]">O: 1.15950</span>
              <span className="w-[46px] border-l border-[#bbb] pl-[3px]">H: 1.15968</span>
              <span className="w-[45px] border-l border-[#bbb] pl-[3px]">L: 1.15942</span>
              <span className="w-[45px] border-l border-[#bbb] pl-[3px]">C: 1.15945</span>
              <span className="w-[43px] border-l border-[#bbb] pl-[3px]">V: 557</span>
              <span className="flex gap-0.5 border-l border-[#bbb] pl-[3px]">
                <svg width="15" height="10" viewBox="0 0 15 10" aria-hidden="true">
                  <path d="M1 0v10M3 0v10M5 0v10M7 0v10" stroke="#79903a" strokeWidth="1.300" />
                  <path d="M9 0v10M11 0v10M13 0v10" stroke="#4f8f86" strokeWidth="1.300" />
                </svg>
                2370/2 kb
              </span>
            </div>
          </div>
        </div>

        {/* taskbar */}
        <footer className="flex h-[25px] items-stretch border-t border-[#7db0dc] bg-[linear-gradient(180deg,rgba(10,35,75,0.35)_0,rgba(255,255,255,0.05)_50%,rgba(0,0,0,0)_100%),linear-gradient(65deg,transparent_0,transparent_79%,#7fbce8_80%,transparent_82%),linear-gradient(90deg,#2b6ca6_0,#3f93cf_25%,#2f8ccc_50%,#1f6fb8_62%,#1d63ac_76%,#14437c_88%,#12386c_100%)]">
          <button type="button" aria-label="Start" className="w-[39px] pl-[5px]">
            <svg width="24" height="24" viewBox="0 0 24 24" aria-hidden="true">
              <circle cx="12" cy="12" r="11" fill="#1e5d8f" stroke="#123d66" />
              <ellipse cx="12" cy="7" rx="8.500" ry="5.500" fill="#7fb5da" opacity="0.700" />
              <path d="M6 7.500c2-1 3.500-1 5.500 0L10.700 12c-2-.9-3.500-.9-5.500 0z" fill="#f0592a" />
              <path d="M12.500 7.800c2 1 3.500 1 5.800 0l-.9 4.400c-2 1-3.700 1-5.700 0z" fill="#8cc63e" />
              <path d="M5 13c2-1 3.500-1 5.500 0l-.8 4.300c-2-.9-3.500-.9-5.500 0z" fill="#3fa8e8" />
              <path d="M11.500 13.300c2 1 3.500 1 5.700 0l-.9 4.300c-2 1-3.600 1-5.600 0z" fill="#fbc92b" />
            </svg>
          </button>
          <button type="button" aria-label="Chrome" className="flex w-[38px] items-center justify-center rounded-xs border border-[#aacbe6] bg-white/30">
            <svg width="21" height="21" viewBox="0 0 20 20" aria-hidden="true">
              <circle cx="10" cy="10" r="9.500" fill="#f6c52e" />
              <path d="M10 10L1.800 5.200A9.500 9.500 0 0 1 18.300 5.500H10z" fill="#e04336" />
              <path d="M1.800 5.200A9.500 9.500 0 0 0 9.500 19.500L14 12.500 10 14.500 6 12z" fill="#2ea24f" />
              <circle cx="10" cy="10" r="4.600" fill="#fff" />
              <circle cx="10" cy="10" r="3.600" fill="#4687f1" />
            </svg>
          </button>
          <button type="button" aria-label="Explorer" className="ml-px flex w-[38px] items-center justify-center rounded-xs border border-r-4 border-double border-[#aacbe6] bg-white/35">
            <svg width="22" height="20" viewBox="0 0 22 20" aria-hidden="true">
              <path d="M1 2h7l1 2h11v13H1z" fill="#f2d98a" stroke="#c9a444" strokeWidth="0.700" />
              <path d="M4 1.500h3v3H4z" fill="#46b357" /><path d="M11 2h3v3h-3z" fill="#e8503a" />
              <path d="M1 6h20v11H1z" fill="#fae9ab" stroke="#d5b55b" strokeWidth="0.600" />
              <path d="M5 18c0-7 1-7 3-7h7c2 0 3 0 3 7h-3v-4H8v4z" fill="#8ecbee" stroke="#5fa6d4" strokeWidth="0.700" />
            </svg>
          </button>
          <button type="button" aria-label="FBS" className="ml-1 flex w-[38px] items-center justify-center rounded-xs border border-[#cfe3f3] bg-white/50">
            <span className="flex h-[21px] w-[21px] items-center justify-center bg-[#3e7d31] text-[8px] leading-3 font-bold text-white underline">FBS</span>
          </button>
          <div className="ml-auto flex items-center text-white">
            <svg width="46" height="12" viewBox="0 0 46 12" className="mr-2.5" aria-hidden="true">
              <path d="M6 1v10M6 2h5v4H6" stroke="#eee" fill="#eee" />
              <circle cx="11" cy="8" r="3" fill="#de3a2a" /><path d="M9.800 6.800l2.400 2.400M12.200 6.800L9.800 9.200" stroke="#fff" strokeWidth="0.800" />
              <path d="M23 2.500h7v5h-7zM25 9.500h4M20.500 1v4h2" fill="#234f83" stroke="#e8eef5" />
              <path d="M38 4.500h2l3-3v9l-3-3h-2z" fill="#f2f2f2" />
            </svg>
            <time className="w-[38px] text-center text-[7px] leading-[11px]">4:36 PM<br />9/13/2018</time>
            <button type="button" aria-label="Show desktop" className="ml-[5px] h-full w-2 border border-[#5d83ae] bg-white/15" />
          </div>
        </footer>

        <Dialog />
      </div>
    </main>
  );
}
